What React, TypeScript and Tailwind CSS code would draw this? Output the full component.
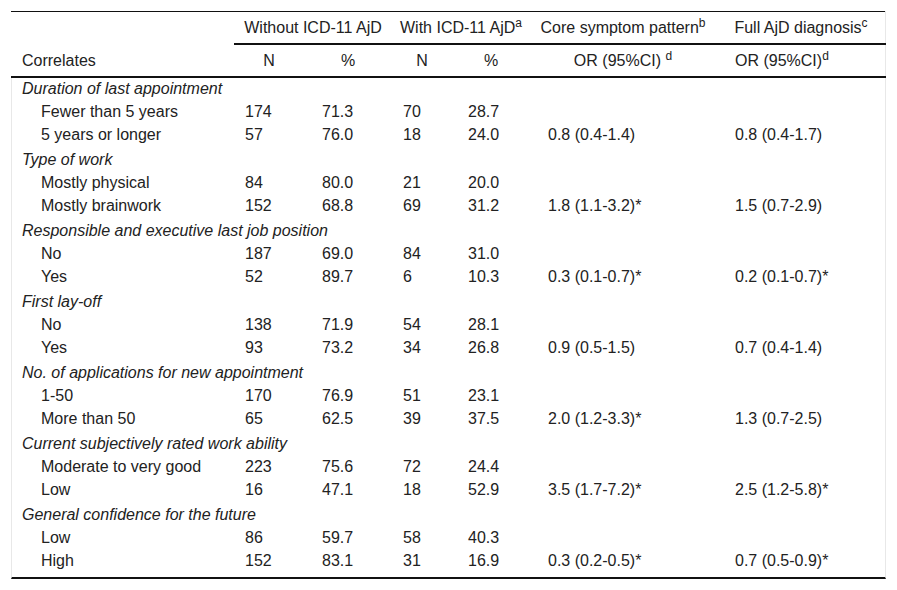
type Row = [string, string, string, string, string, string, string];

const groups: { title: string; rows: Row[] }[] = [
  {
    title: "Duration of last appointment",
    rows: [
      ["Fewer than 5 years", "174", "71.3", "70", "28.7", "", ""],
      ["5 years or longer", "57", "76.0", "18", "24.0", "0.8 (0.4-1.4)", "0.8 (0.4-1.7)"],
    ],
  },
  {
    title: "Type of work",
    rows: [
      ["Mostly physical", "84", "80.0", "21", "20.0", "", ""],
      ["Mostly brainwork", "152", "68.8", "69", "31.2", "1.8 (1.1-3.2)*", "1.5 (0.7-2.9)"],
    ],
  },
  {
    title: "Responsible and executive last job position",
    rows: [
      ["No", "187", "69.0", "84", "31.0", "", ""],
      ["Yes", "52", "89.7", "6", "10.3", "0.3 (0.1-0.7)*", "0.2 (0.1-0.7)*"],
    ],
  },
  {
    title: "First lay-off",
    rows: [
      ["No", "138", "71.9", "54", "28.1", "", ""],
      ["Yes", "93", "73.2", "34", "26.8", "0.9 (0.5-1.5)", "0.7 (0.4-1.4)"],
    ],
  },
  {
    title: "No. of applications for new appointment",
    rows: [
      ["1-50", "170", "76.9", "51", "23.1", "", ""],
      ["More than 50", "65", "62.5", "39", "37.5", "2.0 (1.2-3.3)*", "1.3 (0.7-2.5)"],
    ],
  },
  {
    title: "Current subjectively rated work ability",
    rows: [
      ["Moderate to very good", "223", "75.6", "72", "24.4", "", ""],
      ["Low", "16", "47.1", "18", "52.9", "3.5 (1.7-7.2)*", "2.5 (1.2-5.8)*"],
    ],
  },
  {
    title: "General confidence for the future",
    rows: [
      ["Low", "86", "59.7", "58", "40.3", "", ""],
      ["High", "152", "83.1", "31", "16.9", "0.3 (0.2-0.5)*", "0.7 (0.5-0.9)*"],
    ],
  },
];

// left padding of each column's data cells
const pad = [
  "pl-[29px] border-l border-[#e8e8e8]",
  "pl-[11px]",
  "pl-[18px]",
  "pl-[11px]",
  "pl-[16px]",
  "pl-[18px]",
  "pl-[19px] border-r border-[#e8e8e8]",
];

export default function App() {
  return (
    <div className="min-h-[590px] bg-white pl-[11px] pt-[11px] font-['Liberation_Sans',Arial,sans-serif] text-[16px] leading-[22px] text-[#222]">
      <table className="w-[875px] table-fixed border-separate border-spacing-0">
        <colgroup>
          <col className="w-[223px]" />
          <col className="w-[70px]" />
          <col className="w-[88px]" />
          <col className="w-[60px]" />
          <col className="w-[78px]" />
          <col className="w-[186px]" />
          <col className="w-[170px]" />
        </colgroup>
        <thead>
          <tr>
            <th
              rowSpan={2}
              className="border-t border-b-2 border-[#111] pb-[4px] pl-[11px] text-left align-bottom font-normal"
            >
              Correlates
            </th>
            <th
              colSpan={2}
              className="border-t border-b-2 border-[#111] pb-[4px] pt-[5px] text-center font-normal"
            >
              Without ICD-11 AjD
            </th>
            <th
              colSpan={2}
              className="border-t border-b-2 border-[#111] pb-[4px] pt-[5px] text-center font-normal"
            >
              With ICD-11 AjD<sup>a</sup>
            </th>
            <th className="border-t border-b-2 border-[#111] pb-[4px] pt-[5px] text-center font-normal">
              Core symptom pattern<sup>b</sup>
            </th>
            <th className="relative border-t border-b-2 border-[#111] pb-[4px] pt-[5px] text-center font-normal">
              Full AjD diagnosis<sup>c</sup>
              <span className="absolute -top-px bottom-0 right-0 w-px bg-[#e8e8e8]" />
            </th>
          </tr>
          <tr>
            <th className="border-b-2 border-[#111] pb-[4px] pt-[5px] text-center font-normal">N</th>
            <th className="border-b-2 border-[#111] pb-[4px] pt-[5px] text-center font-normal">%</th>
            <th className="border-b-2 border-[#111] pb-[4px] pt-[5px] text-center font-normal">N</th>
            <th className="border-b-2 border-[#111] pb-[4px] pt-[5px] text-center font-normal">%</th>
            <th className="border-b-2 border-[#111] pb-[4px] pt-[5px] text-center font-normal">
              OR (95%CI) <sup>d</sup>
            </th>
            <th className="relative border-b-2 border-[#111] pb-[4px] pl-[19px] pt-[5px] text-left font-normal">
              OR (95%CI)<sup>d</sup>
              <span className="absolute bottom-0 right-0 top-0 w-px bg-[#e8e8e8]" />
            </th>
          </tr>
        </thead>
        <tbody>
          {groups.map((g, gi) => {
            const lastGroup = gi === groups.length - 1;
            return [
              <tr key={g.title}>
                <td
                  colSpan={7}
                  className={
                    gi === 0
                      ? "border-x border-[#e8e8e8] pl-[10px] italic"
                      : "border-x border-[#e8e8e8] pl-[10px] pt-[3px] italic"
                  }
                >
                  {g.title}
                </td>
              </tr>,
              ...g.rows.map((r, ri) => {
                const lastRow = lastGroup && ri === g.rows.length - 1;
                return (
                  <tr key={g.title + ri}>
                    {r.map((c, ci) => (
                      <td
                        key={ci}
                        className={
                          lastRow
                            ? `${pad[ci]} whitespace-nowrap border-b-2 border-b-[#111] pb-[5px] leading-[23px]`
                            : `${pad[ci]} whitespace-nowrap leading-[23px]`
                        }
                      >
                        {c}
                      </td>
                    ))}
                  </tr>
                );
              }),
            ];
          })}
        </tbody>
      </table>
    </div>
  );
}
